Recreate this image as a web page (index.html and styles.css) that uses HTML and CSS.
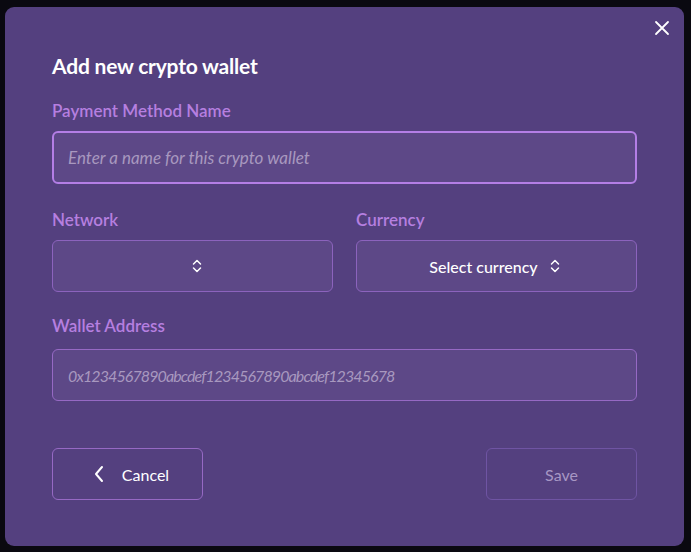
FILE: index.html
```html
<!DOCTYPE html>
<html lang="en">
<head>
<meta charset="utf-8">
<title>Add new crypto wallet</title>
<link rel="stylesheet" href="styles.css">
</head>
<body>
<div class="backdrop">
  <div class="modal">
    <button class="close" aria-label="Close">
      <svg width="16" height="16" viewBox="0 0 16 16"><path d="M2 2 L14 14 M14 2 L2 14" stroke="#ffffff" stroke-width="1.8" stroke-linecap="round" fill="none"/></svg>
    </button>
    <h2 class="title">Add new crypto wallet</h2>

    <div class="field field-first">
      <label class="label">Payment Method Name</label>
      <input class="input input-focus" type="text" placeholder="Enter a name for this crypto wallet" autofocus>
    </div>

    <div class="row">
      <div class="field">
        <label class="label">Network</label>
        <button class="select">
          <span class="select-text"></span>
          <svg class="updown" width="10" height="14" viewBox="0 0 10 14"><path d="M1.5 5 L5 1.5 L8.5 5 M1.5 9 L5 12.5 L8.5 9" stroke="#ffffff" stroke-width="1.5" fill="none" stroke-linecap="round" stroke-linejoin="round"/></svg>
        </button>
      </div>
      <div class="field">
        <label class="label">Currency</label>
        <button class="select">
          <span class="select-text">Select currency</span>
          <svg class="updown" width="10" height="14" viewBox="0 0 10 14"><path d="M1.5 5 L5 1.5 L8.5 5 M1.5 9 L5 12.5 L8.5 9" stroke="#ffffff" stroke-width="1.5" fill="none" stroke-linecap="round" stroke-linejoin="round"/></svg>
        </button>
      </div>
    </div>

    <div class="field field-address">
      <label class="label">Wallet Address</label>
      <input class="input input-address" type="text" placeholder="0x1234567890abcdef1234567890abcdef12345678">
    </div>

    <div class="actions">
      <button class="btn btn-cancel">
        <svg width="10" height="18" viewBox="0 0 10 18"><path d="M8 2 L2 9 L8 16" stroke="#ffffff" stroke-width="2" fill="none" stroke-linecap="round" stroke-linejoin="round"/></svg>
        <span>Cancel</span>
      </button>
      <button class="btn btn-save" disabled>Save</button>
    </div>
  </div>
</div>
</body>
</html>
```
FILE: styles.css
```css
* { box-sizing: border-box; }
html, body { margin: 0; padding: 0; }
body {
  background: #0a0910;
  font-family: "Lato", "Noto Sans", sans-serif;
  width: 691px;
  height: 552px;
  overflow: hidden;
}
.backdrop {
  padding: 7px 7px 6px 5px;
}
.modal {
  position: relative;
  width: 679px;
  height: 539px;
  background: #54407f;
  border-radius: 9px;
  padding: 46px 47px 0 47px;
}
.close {
  position: absolute;
  top: 13px;
  right: 14px;
  width: 16px;
  height: 16px;
  padding: 0;
  border: 0;
  background: none;
  display: flex;
}
.title {
  margin: 0;
  font-size: 21px;
  line-height: 26px;
  font-weight: 700;
  color: #ffffff;
  letter-spacing: -0.2px;
}
.field {
  display: flex;
  flex-direction: column;
  margin-top: 23px;
}
.field-first { margin-top: 21px; }
.label {
  font-size: 17px;
  line-height: 22px;
  font-weight: 600;
  color: #b67fe0;
  margin-bottom: 9px;
}
.input {
  height: 52px;
  width: 585px;
  border: 1px solid #9669c4;
  border-radius: 6px;
  background: #5d4887;
  padding: 0 15px;
  font-family: "Lato", "Noto Sans", sans-serif;
  font-size: 17px;
  font-style: italic;
  color: #ffffff;
  outline: none;
}
.input::placeholder {
  color: #a898bf;
  font-style: italic;
}
.input-focus {
  height: 53px;
  border: 2px solid #b47ee6;
  padding: 0 14px;
  caret-color: #cfc6e0;
}
.input-address {
  font-size: 16px;
  letter-spacing: -0.9px;
}
.field-address .label { margin-bottom: 12px; }
.row {
  display: grid;
  grid-template-columns: 281px 281px;
  column-gap: 23px;
}
.row .field { margin-top: 25px; }
.select {
  height: 52px;
  border: 1px solid #8c63bd;
  border-radius: 6px;
  background: #5d4887;
  display: flex;
  align-items: center;
  justify-content: center;
  gap: 12px;
  font-family: "Lato", "Noto Sans", sans-serif;
  font-size: 16px;
  color: #ffffff;
  padding: 0 4px 0 0;
}
.select-text { font-weight: 500; }
.updown { display: block; }
.actions {
  display: flex;
  justify-content: space-between;
  margin-top: 47px;
}
.btn {
  height: 52px;
  width: 151px;
  border-radius: 6px;
  background: transparent;
  font-family: "Lato", "Noto Sans", sans-serif;
  font-size: 16px;
  display: flex;
  align-items: center;
  justify-content: center;
}
.btn-cancel {
  border: 1px solid #9669c4;
  color: #ffffff;
  gap: 18px;
  padding: 0 0 0 8px;
}
.btn-save {
  border: 1px solid #6f54a3;
  color: #a797c4;
}
```
